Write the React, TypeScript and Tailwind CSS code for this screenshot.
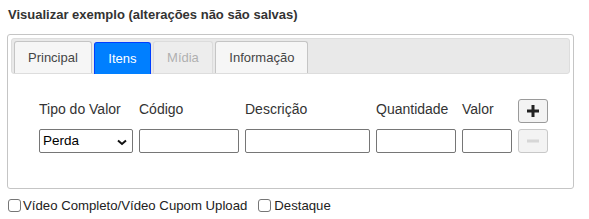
import React from "react";

const tabs = [
  { label: "Principal", state: "default" },
  { label: "Itens", state: "active" },
  { label: "Mídia", state: "disabled" },
  { label: "Informação", state: "default" },
];

export default function App() {
  return (
    <div className="px-[7px] pt-[7px] pr-[15px] font-['Liberation_Sans',Arial,sans-serif] text-[#333]">
      <div className="pl-[1px] h-[15px] leading-[15px] text-[13px] font-bold text-[#333]">
        Visualizar exemplo (alterações não são salvas)
      </div>

      <div className="mt-[12px] h-[155px] border border-[#c5c5c5] rounded-[3px] p-[3px] bg-white">
        <div className="flex items-end gap-[2.5px] h-[36px] px-[2px] border border-[#dddddd] bg-[#e9e9e9] rounded-[3px]">
          {tabs.map((t) => (
            <div
              key={t.label}
              className={
                t.state === "active"
                  ? "h-[32px] mb-[-1px] px-[13px] flex items-center pt-[1px] text-[13px] text-white bg-[#007fff] border border-b-0 border-[#003eff] rounded-t-[3px]"
                  : t.state === "disabled"
                  ? "h-[32px] px-[13px] flex items-center pt-[1px] text-[13px] text-[#454545] bg-[#f6f6f6] border border-b-0 border-[#c5c5c5] rounded-t-[3px] opacity-35"
                  : "h-[32px] px-[13px] flex items-center pt-[1px] text-[13px] text-[#454545] bg-[#f6f6f6] border border-b-0 border-[#c5c5c5] rounded-t-[3px]"
              }
            >
              {t.label}
            </div>
          ))}
        </div>

        <div className="pl-[28px] pt-[25px]">
          <div className="grid grid-cols-[94px_100px_125px_80px_50px_30px] gap-x-[6px] gap-y-[6px] items-center text-[14px] text-[#333]">
            <div className="pb-[3px]">Tipo do Valor</div>
            <div className="pb-[3px]">Código</div>
            <div className="pb-[3px]">Descrição</div>
            <div className="pb-[3px]">Quantidade</div>
            <div className="pb-[3px]">Valor</div>
            <button className="h-[24px] w-[30px] flex items-center justify-center border border-[#9a9a9a] rounded-[3px] bg-[#f3f3f3]">
              <svg width="14" height="14" viewBox="0 0 14 14">
                <path d="M5.5 1h3v4.5H13v3H8.5V13h-3V8.5H1v-3h4.5z" fill="#222" />
              </svg>
            </button>

            <div className="relative h-[24px] border border-[#767676] rounded-[2px] bg-white flex items-center pl-[3px] text-[13.5px] text-black">
              Perda
              <svg className="absolute right-[5px] top-[9px]" width="10" height="7" viewBox="0 0 10 7">
                <path d="M1 1.5l4 3.5 4-3.5" fill="none" stroke="#111" strokeWidth="2" />
              </svg>
            </div>
            <div className="h-[24px] border border-[#767676] rounded-[2px] bg-white" />
            <div className="h-[24px] border border-[#767676] rounded-[2px] bg-white" />
            <div className="h-[24px] border border-[#767676] rounded-[2px] bg-white" />
            <div className="h-[24px] border border-[#767676] rounded-[2px] bg-white" />
            <button className="h-[24px] w-[30px] flex items-center justify-center border border-[#c8c8c8] rounded-[3px] bg-[#f3f3f3]">
              <svg width="14" height="4" viewBox="0 0 14 4">
                <rect x="1" y="0.5" width="12" height="3" fill="#d6d6d6" />
              </svg>
            </button>
          </div>
        </div>
      </div>

      <div className="mt-[7px] pl-[1px] flex items-center text-[13.2px] text-[#222]">
        <span className="w-[13px] h-[13px] border border-[#767676] rounded-[3px] bg-white" />
        <span className="ml-[2px]">Vídeo Completo/Vídeo Cupom Upload</span>
        <span className="ml-[11px] w-[13px] h-[13px] border border-[#767676] rounded-[3px] bg-white" />
        <span className="ml-[3px]">Destaque</span>
      </div>
    </div>
  );
}
